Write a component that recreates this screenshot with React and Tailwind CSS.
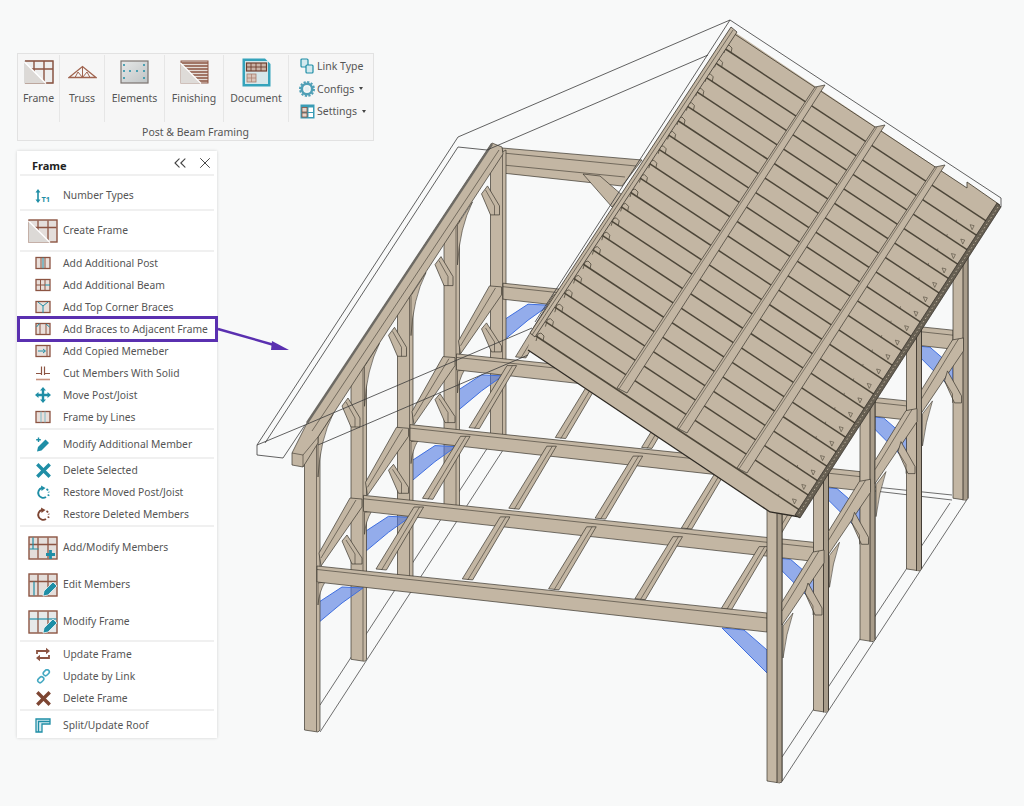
import React from 'react';
import { ChevronsLeft, X } from 'lucide-react';

const TEAL = '#1f8ea6';
const BROWN = '#8c5442';
const TAN = '#c3b6a3';
const INK = '#3b362e';

// ---------- small ribbon / menu icons ----------
const BigFrame = ({ children, lines = 'M10 1.5v21M20 1.5v21M1.5 8.5h27', tint = '#e4dedb' }) => (
  <svg width="30" height="24" viewBox="0 0 30 24">
    <rect x="1" y="1" width="28" height="22" fill={tint} stroke={BROWN} strokeWidth="1.4" />
    <path d={lines} stroke={BROWN} strokeWidth="1.3" fill="none" />
    {children}
  </svg>
);

const Fold = () => (
  <>
    <path d="M0.5 2 L22 23.5 L0.5 23.5 Z" fill="#dcd9d6" />
    <path d="M0.5 2 L22 23.5" stroke="#fff" strokeWidth="1.4" />
  </>
);

const Pencil = () => (
  <path d="M15 23 l1 -5 l9 -9 l4 4 l-9 9 Z" fill={TEAL} stroke="#fff" strokeWidth="0.7" />
);

const SmallBox = ({ children }) => (
  <svg width="16" height="14" viewBox="0 0 16 14">
    <rect x="1" y="1.5" width="14" height="11" fill="#e9dfda" stroke={BROWN} strokeWidth="1.3" />
    {children}
  </svg>
);

const NumberTypes = () => (
  <svg width="18" height="16" viewBox="0 0 18 16">
    <path d="M4 1 L1.5 4.5 H3.2 V11.5 H1.5 L4 15 L6.5 11.5 H4.8 V4.5 H6.5 Z" fill={TEAL} />
    <text x="7.5" y="13.5" fontSize="7.5" fontWeight="700" fill={TEAL}>T1</text>
  </svg>
);

const MoveIcon = () => (
  <svg width="16" height="16" viewBox="0 0 16 16" fill={TEAL}>
    <path d="M8 0 L11 3.5 H9.2 V6.8 H12.5 V5 L16 8 L12.5 11 V9.2 H9.2 V12.5 H11 L8 16 L5 12.5 H6.8 V9.2 H3.5 V11 L0 8 L3.5 5 V6.8 H6.8 V3.5 H5 Z" />
  </svg>
);

const CutIcon = () => (
  <svg width="16" height="15" viewBox="0 0 16 15">
    <path d="M6.5 0.5 V9 M9.5 0.5 V9" stroke={BROWN} strokeWidth="1.2" />
    <path d="M1 7.5 H6 M10 7.5 H15" stroke={BROWN} strokeWidth="1" />
    <path d="M1 13.5 H15" stroke="#c9917d" strokeWidth="1.6" />
  </svg>
);

const ModifyMember = () => (
  <svg width="16" height="16" viewBox="0 0 16 16" fill={TEAL}>
    <path d="M2 14.5 L3 10 L10.5 2.5 L14 6 L6.5 13.5 Z" />
    <path d="M3.5 0.5 V5 M1.2 2.8 H5.8" stroke={TEAL} strokeWidth="1.4" />
  </svg>
);

const CrossIcon = ({ color }) => (
  <svg width="15" height="15" viewBox="0 0 15 15">
    <path d="M2.5 2.5 L12.5 12.5 M12.5 2.5 L2.5 12.5" stroke={color} strokeWidth="3.4" strokeLinecap="square" />
  </svg>
);

const RestoreIcon = ({ color }) => (
  <svg width="15" height="15" viewBox="0 0 15 15" fill="none">
    <path d="M6 3 A5 5 0 1 0 10 12" stroke={color} strokeWidth="1.9" />
    <path d="M10.5 4 a5 5 0 0 1 2.3 3.5 M12.8 9.5 l-0.6 1.3" stroke={color} strokeWidth="1.9" strokeDasharray="2 1.5" />
    <path d="M5 0.5 L9.5 3 L5.5 6 Z" fill={color} />
  </svg>
);

const UpdateIcon = () => (
  <svg width="16" height="15" viewBox="0 0 16 15" fill="none" stroke={BROWN} strokeWidth="1.8">
    <path d="M2 7 V4 H13" />
    <path d="M14 8 V11 H3" />
    <path d="M11 0.8 L15 4 L11 7.2 Z M5 7.8 L1 11 L5 14.2 Z" fill={BROWN} stroke="none" />
  </svg>
);

const LinkIcon = () => (
  <svg width="15" height="15" viewBox="0 0 15 15" fill="none" stroke="#45a9c2" strokeWidth="1.6">
    <rect x="7" y="1.5" width="6.5" height="4.5" rx="2.2" transform="rotate(-45 10.2 3.7)" />
    <rect x="1.5" y="8.5" width="6.5" height="4.5" rx="2.2" transform="rotate(-45 4.7 10.7)" />
  </svg>
);

const RoofIcon = () => (
  <svg width="16" height="15" viewBox="0 0 16 15" fill="#d9ecf1" stroke={TEAL} strokeWidth="1.3">
    <path d="M1 1 H15 V6 H7 V14 H1 Z" />
    <path d="M3.5 14 V3.5 H15" fill="none" />
  </svg>
);

const groups = [
  { rows: [{ label: 'Number Types', icon: <NumberTypes />, h: 'h-[27px] mt-[6px]' }] },
  {
    rows: [{
      label: 'Create Frame',
      h: 'h-[39px]',
      icon: <BigFrame><Fold /></BigFrame>,
    }],
  },
  {
    pad: 'pb-[2px]',
    rows: [
      { label: 'Add Additional Post', icon: <SmallBox><path d="M6 1.5v11M10 1.5v11" stroke={BROWN} /><path d="M8 1.5v11" stroke={TEAL} /></SmallBox> },
      { label: 'Add Additional Beam', icon: <SmallBox><path d="M5.5 1.5v11M10 1.5v11M1 7h9" stroke={BROWN} /><path d="M10 7h5" stroke={TEAL} /></SmallBox> },
      { label: 'Add Top Corner Braces', icon: <SmallBox><path d="M8 6v7M3 2l5 4 5-4" stroke={TEAL} fill="none" /></SmallBox> },
      { label: 'Add Braces to Adjacent Frame', highlight: true, icon: <SmallBox><path d="M5 1.5v11M11 1.5v11" stroke={BROWN} /><path d="M1.5 5l3-3.5M11 2l3.5 3" stroke={TEAL} /></SmallBox> },
      { label: 'Add Copied Memeber', icon: <SmallBox><path d="M12 1.5v11" stroke={BROWN} /><path d="M3 7h7M8 5l2.5 2L8 9" stroke={TEAL} fill="none" /></SmallBox> },
      { label: 'Cut Members With Solid', icon: <CutIcon /> },
      { label: 'Move Post/Joist', icon: <MoveIcon /> },
      { label: 'Frame by Lines', icon: <SmallBox><path d="M6 1.5v11M10 1.5v11" stroke="#7fb9c6" /></SmallBox> },
    ],
  },
  { rows: [{ label: 'Modify Additional Member', icon: <ModifyMember />, h: 'h-[25px]' }] },
  {
    pad: 'pb-[2px]',
    rows: [
      { label: 'Delete Selected', icon: <CrossIcon color={TEAL} /> },
      { label: 'Restore Moved Post/Joist', icon: <RestoreIcon color={TEAL} /> },
      { label: 'Restore Deleted Members', icon: <RestoreIcon color="#7d4532" /> },
    ],
  },
  {
    rows: [
      { label: 'Add/Modify Members', h: 'h-[37px]', icon: <BigFrame><path d="M1.5 13h9M5 1.5v11" stroke={TEAL} strokeWidth="1.2" /><path d="M22.5 14v9M18 18.5h9" stroke={TEAL} strokeWidth="2.8" /></BigFrame> },
      { label: 'Edit Members', h: 'h-[37px]', icon: <BigFrame><path d="M6 8.5v14" stroke={TEAL} strokeWidth="1.2" /><Pencil /></BigFrame> },
      { label: 'Modify Frame', h: 'h-[37px]', icon: <BigFrame lines="M10 1.5v21M20 1.5v21" tint="#e6e9ea"><path d="M1.5 9h27" stroke={TEAL} strokeWidth="1.2" /><Pencil /></BigFrame> },
    ],
  },
  {
    pad: 'pt-[1px] pb-[2px]',
    rows: [
      { label: 'Update Frame', icon: <UpdateIcon /> },
      { label: 'Update by Link', icon: <LinkIcon /> },
      { label: 'Delete Frame', icon: <CrossIcon color="#7d4532" /> },
    ],
  },
  { last: true, rows: [{ label: 'Split/Update Roof', icon: <RoofIcon />, h: 'h-[25px]' }] },
];

const MenuRow = ({ row }) => (
  <div className={`relative flex items-center pl-[6px] ${row.h || 'h-[22px]'}`}>
    <div className="flex w-[40px] shrink-0 items-center justify-center">{row.icon}</div>
    <span className="whitespace-nowrap">{row.label}</span>
    {row.highlight && (
      <div className="absolute -top-[2px] -bottom-[2px] left-0 -right-px border-[3px] border-[#5a30b0]" />
    )}
  </div>
);

const FramePanel = () => (
  <div className="w-[200px] bg-white text-[10.3px] leading-none text-[#555] shadow-[0_0_3px_rgba(0,0,0,0.16)]">
    <div className="mx-[3px] flex h-[25px] items-center border-b-2 border-[#f0f0f0] pl-[12px]">
      <span className="mt-[5px] text-[11px] font-bold text-[#222]">Frame</span>
      <ChevronsLeft className="ml-auto text-[#444]" size={20} strokeWidth={1.3} />
      <X className="ml-[6px] text-[#444]" size={18} strokeWidth={1.3} />
    </div>
    {groups.map((group, i) => (
      <div key={i} className={group.pad || ''}>
        {group.rows.map((row) => <MenuRow key={row.label} row={row} />)}
        {!group.last && <div className="mx-[3px] h-[2px] bg-[#f0f0f0]" />}
      </div>
    ))}
  </div>
);

// ---------- ribbon ----------
const RibbonButton = ({ width, label, children, last }) => (
  <div className={`flex h-[67px] flex-col items-center ${last ? '' : 'border-r border-[#e6e6e6]'} ${width}`}>
    <div className="flex h-[29px] w-full items-end justify-center">{children}</div>
    <span className="mt-[9px] whitespace-nowrap">{label}</span>
  </div>
);

const RibbonFrame = () => (
  <svg width="30" height="24" viewBox="0 0 30 24">
    <rect x="1" y="1" width="28" height="22" fill="#eee" stroke="#999" strokeWidth="0.6" />
    <path d="M10 1v22M20 1v22M1 9h28M1 1h28v22H1" stroke={BROWN} strokeWidth="1.4" fill="none" />
    <Fold />
  </svg>
);

const Truss = () => (
  <svg width="29" height="14" viewBox="0 0 29 14" fill="none" stroke="#a0644f" strokeWidth="1.3">
    <path d="M1 12.5 L14.5 1.5 L28 12.5 Z" />
    <path d="M7 12.5 L10 7 L14.5 12.5 L19 7 L22 12.5 M14.5 1.5 V12.5" strokeWidth="1" />
  </svg>
);

const Elements = () => (
  <svg width="29" height="24" viewBox="0 0 29 24">
    <defs>
      <linearGradient id="elementsFill" x1="0" y1="0" x2="1" y2="1">
        <stop offset="0" stopColor="#e6e8e8" />
        <stop offset="1" stopColor="#bfc3c4" />
      </linearGradient>
    </defs>
    <rect x="1" y="1" width="27" height="22" fill="url(#elementsFill)" stroke="#7c7470" strokeWidth="1.2" />
    <g fill={TEAL}>
      {[[4, 5], [24, 5], [4, 11], [10, 11], [17, 11], [24, 11], [4, 18], [24, 18]].map(([cx, cy]) => (
        <circle key={`${cx}-${cy}`} cx={cx} cy={cy} r="1" />
      ))}
    </g>
  </svg>
);

const Finishing = () => (
  <svg width="29" height="24" viewBox="0 0 29 24">
    <rect x="1" y="1" width="27" height="22" fill="#e3dbd6" stroke={BROWN} strokeWidth="1" />
    <path d="M1 3h27M1 6h27M1 9h27M1 12h27M1 15h27M1 18h27M1 21h27" stroke={BROWN} strokeWidth="1.5" />
    <path d="M0.5 3 L21 23.5 L0.5 23.5 Z" fill="#dedbd8" />
    <path d="M0.5 3 L21 23.5" stroke="#fff" strokeWidth="1.3" />
  </svg>
);

const DocumentIcon = () => (
  <svg className="-mb-[3px]" width="29" height="29" viewBox="0 0 29 29">
    <path d="M0.5 0.5 H23 L28.5 6 V28.5 H0.5 Z" fill="#35a3bb" />
    <rect x="3" y="3" width="23" height="23" fill="#d6e7ea" />
    <rect x="4.5" y="5" width="20" height="8" fill="#c9b3a6" stroke="#6e3f2f" strokeWidth="1.2" />
    <path d="M9 5v8M14 5v8M19 5v8M4.5 9h20" stroke="#6e3f2f" strokeWidth="0.9" />
    <rect x="5" y="16" width="9" height="8" fill="#d9c5ba" stroke="#a77c6b" strokeWidth="0.8" />
    <path d="M9.5 16v8M5 20h9" stroke="#a77c6b" strokeWidth="0.7" />
  </svg>
);

const LinkType = () => (
  <svg width="14" height="16" viewBox="0 0 14 16" fill="#d3e9ee" stroke={TEAL} strokeWidth="1.2">
    <rect x="1" y="1" width="7" height="8" rx="1" />
    <rect x="6" y="7" width="7" height="8" rx="1" />
  </svg>
);

const Gear = () => (
  <svg width="16" height="16" viewBox="0 0 16 16">
    <circle cx="8" cy="8" r="5.2" fill="none" stroke="#4f9fb6" strokeWidth="2.6" />
    <circle cx="8" cy="8" r="7" fill="none" stroke="#4f9fb6" strokeWidth="2" strokeDasharray="2.2 1.46" />
    <circle cx="8" cy="8" r="2.4" fill="#e3f0f3" />
  </svg>
);

const SettingsIcon = () => (
  <svg width="15" height="15" viewBox="0 0 15 15">
    <rect x="0.5" y="0.5" width="14" height="14" fill="#3a9cb5" />
    <rect x="2" y="3.5" width="5" height="4.5" fill="#e5d5cc" stroke={BROWN} strokeWidth="0.8" />
    <rect x="2" y="9" width="5" height="4" fill="#e5d5cc" stroke={BROWN} strokeWidth="0.8" />
    <rect x="8.5" y="3.5" width="4.5" height="4.5" fill="#fff" />
    <rect x="8.5" y="9" width="4.5" height="4" fill="#fff" />
  </svg>
);

const SideItem = ({ icon, label, caret }) => (
  <div className="flex h-[22.5px] items-center">
    <div className="flex w-[20px] justify-center">{icon}</div>
    <span className="whitespace-nowrap">{label}</span>
    {caret && <span className="ml-[5px] h-0 w-0 border-x-[2px] border-t-[3px] border-x-transparent border-t-[#444]" />}
  </div>
);

const Ribbon = () => (
  <div className="flex h-[88px] w-[357px] flex-col border border-[#e2e2e2] bg-[#f6f6f6] text-[10.5px] leading-none text-[#555]">
    <div className="flex pt-[1px]">
      <RibbonButton width="w-[42px]" label="Frame"><RibbonFrame /></RibbonButton>
      <RibbonButton width="w-[45px]" label="Truss"><div className="mb-[5px]"><Truss /></div></RibbonButton>
      <RibbonButton width="w-[60px]" label="Elements"><Elements /></RibbonButton>
      <RibbonButton width="w-[59px]" label="Finishing"><Finishing /></RibbonButton>
      <RibbonButton width="w-[65px]" label="Document"><DocumentIcon /></RibbonButton>
      <div className="flex flex-col pl-[8px]">
        <SideItem icon={<LinkType />} label="Link Type" />
        <SideItem icon={<Gear />} label="Configs" caret />
        <SideItem icon={<SettingsIcon />} label="Settings" caret />
      </div>
    </div>
    <div className="mt-[4px] text-center">Post &amp; Beam Framing</div>
  </div>
);

// ---------- timber frame drawing ----------
const bays = [4, 3, 2, 1, 0];
const shift = (i) => `translate(${i * 46.5} ${-i * 70.7})`;
const rafterY = (x) => {
  const upper = 423 - (x - 307) * 1.508;
  const lower = 435 - (x - 318) * 1.538;
  return Math.max(150, (upper + lower) / 2);
};

const Timber = (props) => <polygon fill={TAN} stroke={INK} strokeWidth="0.7" strokeLinejoin="round" {...props} />;
const Hair = (props) => <path fill="none" stroke={INK} strokeWidth="0.6" {...props} />;
const Blue = (props) => <polygon fill="#4a74e0" fillOpacity="0.58" stroke="#3f6fe0" strokeWidth="1" {...props} />;

const LeftPost = ({ i }) => {
  const xl = 304.5 + i * 46.5;
  const xr = 320 + i * 46.5;
  const bottom = 730 - i * 70.7;
  return (
    <g>
      <Timber points={`${xl},${rafterY(xl)} ${xr},${rafterY(xr)} ${xr},${bottom} ${xr - 2},${bottom + 2} ${xl},${bottom}`} />
      <Hair d={`M${xr - 3.5} ${rafterY(xr)} V${bottom + 1.5}`} />
    </g>
  );
};

const Slice = ({ i }) => (
  <g>
    <g transform={shift(i)}>
      <Blue points="317.5,603 342,587 363,588 342,603 318,623" />
      <Blue points="722,628 744,630 767,650 767,673" />
    </g>
    <LeftPost i={i} />
    <g transform={shift(i)}>
      {i > 0 && (
        <g transform={`translate(${-46.5} ${70.7})`}>
          <Timber points="342,406 348,398 360,418 360,427 351,427" />
          <Hair d="M346 402 L355 418 V427" />
        </g>
      )}
      {i < 4 && (
        <>
          <path d="M318 477 Q320 440 333 414 L318 437 Z" fill={TAN} stroke={INK} strokeWidth="0.6" />
          <path d="M318 605 Q319 592 325 582 L318 583 Z" fill={TAN} stroke={INK} strokeWidth="0.6" />
          <Timber points="319,553 350,498 362,499 362,507 321,566" />
          <Hair d="M321 558 L356 500" />
          <Timber points="342,541 347,535 358,552 362,558 362,564 352,564" />
          <Hair d="M346 540 L355 554 V564" />
          {[0, 1, 2, 3, 4].map((c) => (
            <g key={c} transform={`translate(${c * 86.3} ${c * 9.9})`}>
              <Timber points="376,569 414,507 423.6,507 386.4,570" />
              <Hair d="M381.5 570 L419.5 507" />
            </g>
          ))}
        </>
      )}
      <Timber points="317,566 767,613 767,632 317,582" />
      <Hair d="M317 569.5 L767 618" />
      <Timber points="767,500 782,500 782,781 780,783 767,781" />
      <polygon points="777,500 782,500 782,781 777,783" fill="#a89c8a" />
      <Hair d="M777 500 V783 M782 500 V781" strokeWidth="0.9" />
      {i < 4 && (
        <>
          <path d="M783 626 L793 613 Q786 634 783 658 Z" fill={TAN} stroke={INK} strokeWidth="0.6" />
          <Timber points="782,602 813,552 824,550 824,563 782,625" />
          <Hair d="M782 611 L819 551" />
          <Timber points="808,583 822,608 822,615 815,615 805,593" />
          <Hair d="M805 593 L813 606 V615" />
        </>
      )}
    </g>
  </g>
);

const Roof = () => {
  const planks = Array.from({ length: 21 }, (_, i) => {
    const sx = 727 - 9.4 * i;
    const sy = 50 + 14.4 * i;
    const ex = (997 - 0.648 * (sy - 0.66 * sx - 205)) / 1.4277;
    return { sx, sy, ex, ey: sy + 0.66 * (ex - sx) };
  });
  return (
    <g>
      <polygon points="733,31 967,188 967,182 1000,205 800,517 770,512 528,350 530,333" fill={TAN} />
      <path d="M733 33 L967 188 V182 L1000 205" fill="none" stroke="#4d4639" strokeWidth="0.9" />
      <path d="M528 350 L770 512 L800 517" fill="none" stroke="#2e2a24" strokeWidth="1.3" />
      {planks.map((p, i) => (
        <g key={i}>
          <path d={`M${p.sx - 3} ${p.sy - 2} L${p.ex} ${p.ey}`} stroke="#4d4639" strokeWidth="1.5" />
          <path
            d={`M${p.sx - 3} ${p.sy + 3} l2 -7 l3 -1 l3 3 l-1 5`}
            fill="none"
            stroke="#4d4639"
            strokeWidth="0.8"
          />
          {i > 0 && (
            <path
              d={`M${p.ex - 21} ${p.ey - 14} l0.5 -2 M${p.ex - 7} ${p.ey - 11} l4 1 l-2 4 Z`}
              fill="none"
              stroke="#4d4639"
              strokeWidth="0.6"
            />
          )}
        </g>
      ))}
      {[0, 1, 2].map((n) => (
        <g key={n} transform={`translate(${n * 60} ${n * 40})`}>
          <Timber points="815,87 825,85 627,393 617,388" />
          <Hair d="M817 87 L619 389" strokeWidth="0.5" />
        </g>
      ))}
      {/* left verge */}
      <polygon points="731,27 737,32 535,337 530,333" fill={TAN} stroke={INK} strokeWidth="0.8" />
      <Hair d="M733 30 L532 335" />
      {/* dark fascia on the eave */}
      <polygon points="1001,207 800,518 795,515 997,203" fill="#665f52" stroke="#2e2a24" strokeWidth="0.7" />
      <path d="M998 207 L798 515" stroke={TAN} strokeWidth="0.9" strokeDasharray="1.5 2.5" fill="none" />
    </g>
  );
};

const FrameModel = () => (
  <svg className="absolute inset-0" width="1024" height="806" viewBox="0 0 1024 806">
    {/* purple call-out arrow */}
    <path d="M218 329 L274 345" stroke="#5a30b0" strokeWidth="2.4" />
    <polygon points="272,341 289,350 271,350" fill="#5a30b0" />

    {/* floor outline */}
    <g fill="none" stroke="#4a4a4a" strokeWidth="0.8">
      <path d="M320 705 L490 444 M320 732 L505 447" />
      <path d="M968 498 L781 783 M950 503 L782 757" />
      <path d="M875 487 L952 495 M875 491 L952 500" />
    </g>

    {/* ridge beam at the far gable */}
    <Timber points="502,148 642,160 622,186 502,173" />
    <Hair d="M503 153 L636 166 M503 165 L625 177" />
    <Timber points="583,174 600,176 622,195 612,207" />

    {bays.map((i) => <Slice key={i} i={i} />)}

    {/* gable rafter */}
    <Timber points="492,143 502,147 503,154 318,437 318,443 303,467 292,465 292,453 307,423" />
    <path d="M492 144 L307 423" stroke="#6d6a64" strokeWidth="2.4" />
    <Hair d="M499 150 L312 431 M318 437 L303 455 L292 453 M303 455 V467" />

    <Roof />

    {/* roof outline drawn over the model */}
    <g fill="none" stroke="#3a3a3a" strokeWidth="0.8">
      <path d="M257 445 L458 137 L730 20 L1001 198 V207" />
      <path d="M257 445 V455 L283 458 L305 425 M257 445 L305 425" />
      <path d="M265 443 L458 147 L487 150 L708 55" />
      <path d="M730 20 L535 322" />
      <path d="M305 425 L532 328 M318 445 L528 355" />
    </g>
  </svg>
);

const App = () => (
  <div className="relative h-[806px] w-[1024px] overflow-hidden bg-[#f8f9f9] font-['Noto_Sans',sans-serif]">
    <FrameModel />
    <div className="relative flex w-[374px] flex-col gap-[10px] pl-[17px] pt-[53px]">
      <Ribbon />
      <FramePanel />
    </div>
  </div>
);

export default App;
